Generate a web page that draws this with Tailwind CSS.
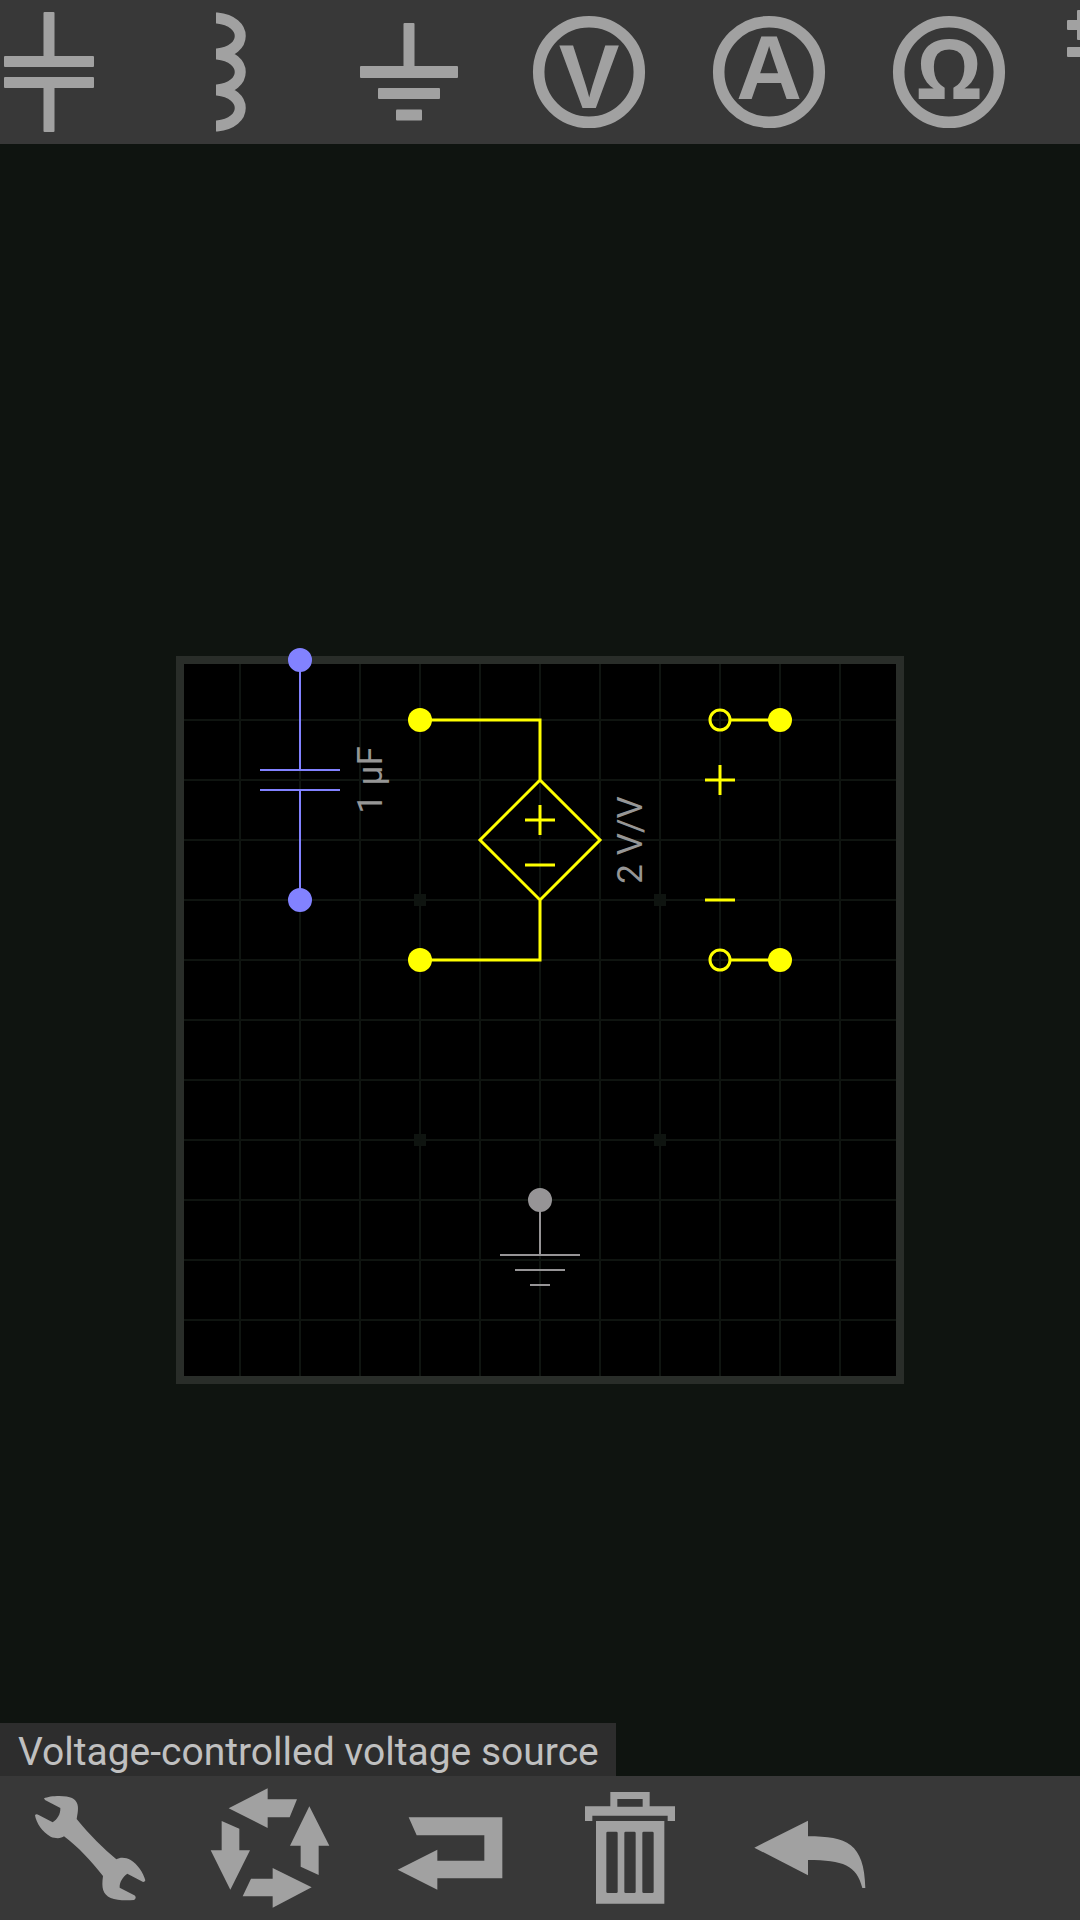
<!DOCTYPE html>
<html lang="en">
<head>
<meta charset="utf-8">
<meta name="viewport" content="width=device-width, initial-scale=1">
<title>Circuit editor</title>
<script src="https://cdn.jsdelivr.net/npm/@tailwindcss/browser@4"></script>
</head>
<body class="flex min-h-screen flex-col overflow-x-hidden bg-[#0f1410] font-['Roboto',sans-serif]">

<!-- Component palette, scrolled sideways -->
<header class="h-36 overflow-hidden bg-[#383838]">
  <div class="-ml-[41px] flex text-[#a1a1a1]">
    <button type="button" aria-label="Capacitor" class="w-45 shrink-0">
      <svg class="block w-full" viewBox="0 0 180 144" fill="currentColor"><rect x="45" y="56" width="90" height="11" rx="1"/><rect x="45" y="77" width="90" height="11" rx="1"/><rect x="84.5" y="12" width="11" height="50" rx="1"/><rect x="84.5" y="82" width="11" height="50" rx="1"/></svg>
    </button>
    <button type="button" aria-label="Inductor" class="w-45 shrink-0">
      <svg class="block w-full" viewBox="0 0 180 144" fill="none" stroke="currentColor" stroke-width="11"><path d="M77 18h1C109 21 109 51 78 54h-1M77 54h1C109 57 109 87 78 90h-1M77 90h1C109 93 109 123 78 126h-1"/></svg>
    </button>
    <button type="button" aria-label="Ground" class="w-45 shrink-0">
      <svg class="block w-full" viewBox="0 0 180 144" fill="currentColor"><rect x="84.5" y="23" width="11" height="50" rx="1"/><rect x="41" y="66" width="98" height="12" rx="1"/><rect x="59" y="88" width="62" height="11" rx="1"/><rect x="77" y="109.500" width="26" height="11" rx="1"/></svg>
    </button>
    <button type="button" aria-label="Voltmeter" class="w-45 shrink-0">
      <svg class="block w-full" viewBox="0 0 180 144" fill="currentColor"><circle cx="90" cy="72" r="50.300" fill="none" stroke="currentColor" stroke-width="11.500"/><text x="90" y="108" text-anchor="middle" class="font-['Liberation_Sans',sans-serif] text-[91px] font-bold">V</text></svg>
    </button>
    <button type="button" aria-label="Ammeter" class="w-45 shrink-0">
      <svg class="block w-full" viewBox="0 0 180 144" fill="currentColor"><circle cx="90" cy="72" r="50.300" fill="none" stroke="currentColor" stroke-width="11.500"/><text x="90" y="99" text-anchor="middle" class="font-['Liberation_Sans',sans-serif] text-[91px] font-bold">A</text></svg>
    </button>
    <button type="button" aria-label="Ohmmeter" class="w-45 shrink-0">
      <svg class="block w-full" viewBox="0 0 180 144" fill="currentColor"><circle cx="90" cy="72" r="50.300" fill="none" stroke="currentColor" stroke-width="11.500"/><text x="90" y="99" text-anchor="middle" class="font-['Open_Sans',sans-serif] text-[83px] font-bold">Ω</text></svg>
    </button>
    <button type="button" aria-label="Source" class="w-45 shrink-0">
      <svg class="block w-full" viewBox="0 0 180 144" fill="currentColor"><rect x="28" y="20" width="30" height="10" rx="1"/><rect x="38" y="10" width="10" height="30" rx="1"/><rect x="28" y="47" width="30" height="10" rx="1"/></svg>
    </button>
  </div>
</header>

<!-- Circuit canvas -->
<main class="relative flex flex-1 items-center justify-center pt-30">
  <svg class="block h-auto w-[728px] max-w-full overflow-visible" viewBox="-4 -4 728 728" role="img" aria-label="Circuit">
    <rect width="720" height="720" fill="#000"/>
    <path d="M60 0V720M120 0V720M180 0V720M240 0V720M300 0V720M360 0V720M420 0V720M480 0V720M540 0V720M600 0V720M660 0V720M0 60H720M0 120H720M0 180H720M0 240H720M0 300H720M0 360H720M0 420H720M0 480H720M0 540H720M0 600H720M0 660H720" stroke="#0f1410" stroke-width="2"/>
    <path d="M234 234h12v12h-12zM474 234h12v12h-12zM234 474h12v12h-12zM474 474h12v12h-12z" fill="#0f1410"/>
    <rect width="720" height="720" fill="none" stroke="#292d29" stroke-width="8"/>

    <!-- Capacitor -->
    <g fill="#8282ff" stroke="#8282ff" stroke-width="2">
      <path d="M120 0V110M80 110H160M80 130H160M120 130V240"/>
      <circle cx="120" cy="0" r="11"/><circle cx="120" cy="240" r="11"/>
    </g>

    <!-- Voltage-controlled voltage source -->
    <g fill="none" stroke="#ffff00" stroke-width="3">
      <path d="M240 60H360V120M240 300H360V240M360 120L420 180L360 240L300 180ZM345 160H375M360 145V175M345 205H375"/>
      <path d="M551 60H600M551 300H600M525 120H555M540 105V135M525 240H555"/>
      <circle cx="540" cy="60" r="10"/><circle cx="540" cy="300" r="10"/>
    </g>
    <g fill="#ffff00">
      <circle cx="240" cy="60" r="12"/><circle cx="240" cy="300" r="12"/><circle cx="600" cy="60" r="12"/><circle cx="600" cy="300" r="12"/>
    </g>

    <!-- Ground -->
    <g fill="#969496" stroke="#969496" stroke-width="2">
      <path d="M360 540V595M320 595H400M335 610H385M350 625H370"/>
      <circle cx="360" cy="540" r="11"/>
    </g>

    <g fill="#969696" text-anchor="middle" class="text-[35px]">
      <text transform="translate(202 120) rotate(-90)">1 µF</text>
      <text transform="translate(462 180) rotate(-90)">2 V/V</text>
    </g>
  </svg>
  <p class="absolute bottom-0 left-0 bg-[#2d2d2d] pr-[17px] pl-[18px] pt-[5px] text-[39px] leading-[48px] text-[#c0c0c0]">Voltage-controlled voltage source</p>
</main>

<!-- Edit actions -->
<footer class="flex h-36 overflow-hidden bg-[#383838] text-[#a1a1a1]">
  <button type="button" aria-label="Properties" class="w-45">
    <svg class="block w-full" viewBox="0 198 540 432" fill="currentColor"><path d="M132 265C150 256 200 255 216 264C234 273 236 290 233 308L230 327C270 376 310 415 349 448C360 441 378 442 392 450C412 462 430 488 436 511C434 516 430 517 425 514L382 491C368 501 358 516 359 533L403 556C409 560 408 567 402 570C380 572 350 572 332 564C308 552 304 534 309 498C272 452 236 412 192 379C184 386 166 386 152 380C128 368 108 338 105 316C107 312 111 312 116 315L158 337C172 328 182 312 181 294L135 270Z"/></svg>
  </button>
  <button type="button" aria-label="Rotate" class="w-45">
    <svg class="block w-full" viewBox="540 198 540 432" fill="currentColor"><path d="M686 295L803 235V268H891L869 322H803V354ZM928 289L988 407H956V495L902 470V407H870ZM935 532L818 593V559H728L753 506H818V474ZM691 539L632 421H665V333L718 356V421H750Z"/></svg>
  </button>
  <button type="button" aria-label="Flip" class="w-45">
    <svg class="block w-full" viewBox="0 198 540 432" fill="currentColor"><path d="M146 322H427V505H232V539L113 479L232 419V452H373V376H170Z"/></svg>
  </button>
  <button type="button" aria-label="Delete" class="w-45">
    <svg class="block w-full" viewBox="540 198 540 432" fill="currentColor" fill-rule="evenodd"><path d="M751 246H869V289H945V333H923V317H697V333H675V289H751ZM772 267V290H848V267ZM708 333H913V581H708ZM743 365Q739 365 739 369V545Q739 549 743 549H769Q773 549 773 545V369Q773 365 769 365ZM797 365Q793 365 793 369V545Q793 549 797 549H823Q827 549 827 545V369Q827 365 823 365ZM851 365Q847 365 847 369V545Q847 549 851 549H877Q881 549 881 545V369Q881 365 877 365Z"/></svg>
  </button>
  <button type="button" aria-label="Undo" class="w-45">
    <svg class="block w-full" viewBox="60 198 540 432" fill="currentColor"><path d="M163 413L324 332V379C440 379 493 400 496 534H487C470 466 430 450 324 450V496Z"/></svg>
  </button>
</footer>
</body>
</html>
